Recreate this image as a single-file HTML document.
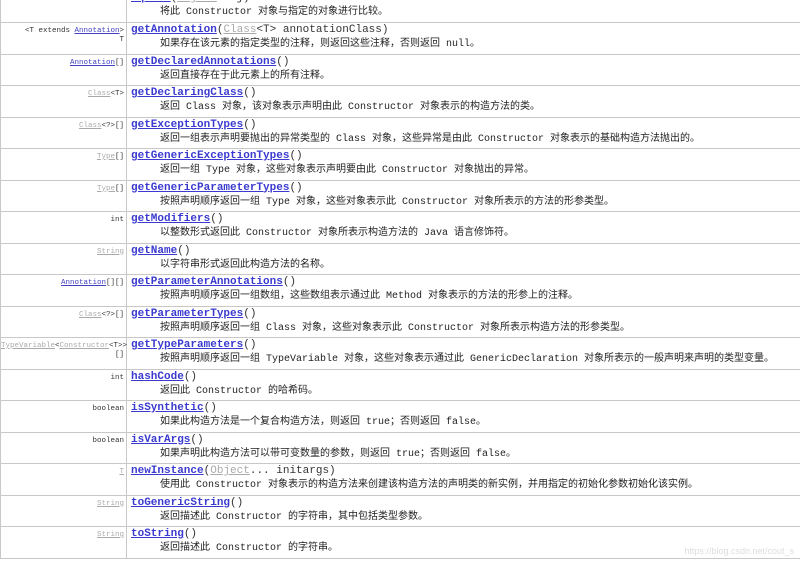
<!DOCTYPE html>
<html><head><meta charset="utf-8"><style>
body{margin:0;width:800px;height:563px;background:#fff;overflow:hidden;position:relative;font-family:"Liberation Mono","Noto Sans CJK SC",monospace;}
.r{position:absolute;left:0;width:800px;height:31px;border-top:1px solid #c8c8c8;}
.l{position:absolute;left:0;top:0;width:127px;height:31px;border-left:1px solid #c8c8c8;border-right:1px solid #c8c8c8;text-align:right;font-size:7.5px;line-height:9px;padding-top:4px;box-sizing:border-box;padding-right:2px;color:#333;}
.m{position:absolute;left:131px;top:1px;font-size:11px;line-height:13px;color:#333;white-space:nowrap;}
.m b{color:#3a3ad0;text-decoration:underline;}
.d{position:absolute;left:160px;top:15px;font-size:10px;line-height:13px;color:#222;white-space:nowrap;font-family:"Liberation Mono","Noto Sans CJK SC",monospace;}
.g{color:#aaa;text-decoration:underline;}
.a{color:#4040c0;text-decoration:underline;}
.wm{position:absolute;right:6px;top:546px;font-size:9px;color:#ddd;font-family:"Liberation Sans",sans-serif;}
</style></head><body>
<div class="r" style="top:-10px"><div class="l"></div><div class="m"><b>equals</b>(<span class="g">Object</span> obj)</div><div class="d">将此 Constructor 对象与指定的对象进行比较。</div></div>
<div class="r" style="top:22px"><div class="l">&lt;T extends <span class="a">Annotation</span>&gt;<br>T</div><div class="m"><b>getAnnotation</b>(<span class="g">Class</span>&lt;T&gt; annotationClass)</div><div class="d">如果存在该元素的指定类型的注释，则返回这些注释，否则返回 null。</div></div>
<div class="r" style="top:53.5px"><div class="l"><span class="a">Annotation</span>[]</div><div class="m"><b>getDeclaredAnnotations</b>()</div><div class="d">返回直接存在于此元素上的所有注释。</div></div>
<div class="r" style="top:85px"><div class="l"><span class="g">Class</span>&lt;T&gt;</div><div class="m"><b>getDeclaringClass</b>()</div><div class="d">返回 Class 对象，该对象表示声明由此 Constructor 对象表示的构造方法的类。</div></div>
<div class="r" style="top:116.5px"><div class="l"><span class="g">Class</span>&lt;?&gt;[]</div><div class="m"><b>getExceptionTypes</b>()</div><div class="d">返回一组表示声明要抛出的异常类型的 Class 对象，这些异常是由此 Constructor 对象表示的基础构造方法抛出的。</div></div>
<div class="r" style="top:148px"><div class="l"><span class="g">Type</span>[]</div><div class="m"><b>getGenericExceptionTypes</b>()</div><div class="d">返回一组 Type 对象，这些对象表示声明要由此 Constructor 对象抛出的异常。</div></div>
<div class="r" style="top:179.5px"><div class="l"><span class="g">Type</span>[]</div><div class="m"><b>getGenericParameterTypes</b>()</div><div class="d">按照声明顺序返回一组 Type 对象，这些对象表示此 Constructor 对象所表示的方法的形参类型。</div></div>
<div class="r" style="top:211px"><div class="l">int</div><div class="m"><b>getModifiers</b>()</div><div class="d">以整数形式返回此 Constructor 对象所表示构造方法的 Java 语言修饰符。</div></div>
<div class="r" style="top:242.5px"><div class="l"><span class="g">String</span></div><div class="m"><b>getName</b>()</div><div class="d">以字符串形式返回此构造方法的名称。</div></div>
<div class="r" style="top:274px"><div class="l"><span class="a">Annotation</span>[][]</div><div class="m"><b>getParameterAnnotations</b>()</div><div class="d">按照声明顺序返回一组数组，这些数组表示通过此 Method 对象表示的方法的形参上的注释。</div></div>
<div class="r" style="top:305.5px"><div class="l"><span class="g">Class</span>&lt;?&gt;[]</div><div class="m"><b>getParameterTypes</b>()</div><div class="d">按照声明顺序返回一组 Class 对象，这些对象表示此 Constructor 对象所表示构造方法的形参类型。</div></div>
<div class="r" style="top:337px"><div class="l"><span class="g">TypeVariable</span>&lt;<span class="g">Constructor</span>&lt;T&gt;&gt;<br>[]</div><div class="m"><b>getTypeParameters</b>()</div><div class="d">按照声明顺序返回一组 TypeVariable 对象，这些对象表示通过此 GenericDeclaration 对象所表示的一般声明来声明的类型变量。</div></div>
<div class="r" style="top:368.5px"><div class="l">int</div><div class="m"><b>hashCode</b>()</div><div class="d">返回此 Constructor 的哈希码。</div></div>
<div class="r" style="top:400px"><div class="l">boolean</div><div class="m"><b>isSynthetic</b>()</div><div class="d">如果此构造方法是一个复合构造方法，则返回 true；否则返回 false。</div></div>
<div class="r" style="top:431.5px"><div class="l">boolean</div><div class="m"><b>isVarArgs</b>()</div><div class="d">如果声明此构造方法可以带可变数量的参数，则返回 true；否则返回 false。</div></div>
<div class="r" style="top:463px"><div class="l"><span class="g">T</span></div><div class="m"><b>newInstance</b>(<span class="g">Object</span>... initargs)</div><div class="d">使用此 Constructor 对象表示的构造方法来创建该构造方法的声明类的新实例，并用指定的初始化参数初始化该实例。</div></div>
<div class="r" style="top:494.5px"><div class="l"><span class="g">String</span></div><div class="m"><b>toGenericString</b>()</div><div class="d">返回描述此 Constructor 的字符串，其中包括类型参数。</div></div>
<div class="r" style="top:526px;border-bottom:1px solid #c8c8c8;"><div class="l"><span class="g">String</span></div><div class="m"><b>toString</b>()</div><div class="d">返回描述此 Constructor 的字符串。</div></div>
<div class="wm">https://blog.csdn.net/cout_s</div>
</body></html>
